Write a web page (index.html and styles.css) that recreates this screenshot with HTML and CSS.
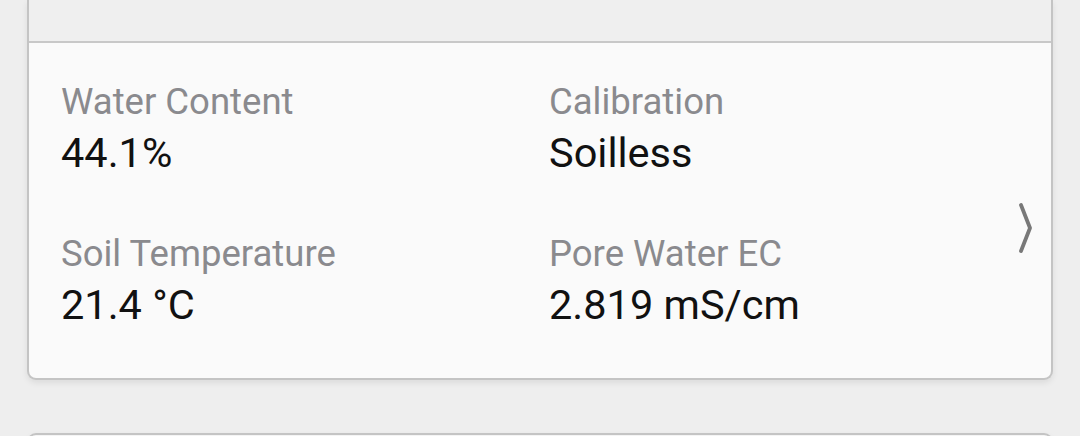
FILE: index.html
```html
<!DOCTYPE html>
<html>
<head>
<meta charset="utf-8">
<link rel="stylesheet" href="styles.css">
</head>
<body>
<div class="card">
  <div class="card-head"></div>
  <div class="card-body">
    <div class="grid">
      <div class="cell">
        <div class="label">Water Content</div>
        <div class="value">44.1%</div>
      </div>
      <div class="cell">
        <div class="label">Calibration</div>
        <div class="value">Soilless</div>
      </div>
      <div class="cell">
        <div class="label">Soil Temperature</div>
        <div class="value">21.4 °C</div>
      </div>
      <div class="cell">
        <div class="label">Pore Water EC</div>
        <div class="value">2.819 mS/cm</div>
      </div>
    </div>
    <svg class="chevron" width="18" height="52" viewBox="0 0 18 52">
      <path d="M4 4 L13 27 L4 50" fill="none" stroke="#787878" stroke-width="3.8" stroke-linecap="round" stroke-linejoin="round"/>
    </svg>
  </div>
</div>
<div class="card next"></div>
</body>
</html>
```
FILE: styles.css
```css
html, body {
  margin: 0;
  padding: 0;
  background: #eeeeee;
  font-family: Roboto, "Liberation Sans", sans-serif;
  overflow: hidden;
}
.card {
  margin-left: 27px;
  width: 1026px;
  box-sizing: border-box;
  border: 2px solid #c4c4c4;
  border-top: none;
  border-radius: 0 0 9px 9px;
  background: #fafafa;
  box-shadow: 0 3px 6px rgba(0,0,0,0.08);
}
.card-head {
  height: 41px;
  background: #efefef;
  border-bottom: 2px solid #c8c8c8;
}
.card-body {
  display: flex;
  align-items: flex-start;
  padding: 37px 16px 0 32px;
  height: 335px;
  box-sizing: border-box;
}
.grid {
  flex: 1;
  display: grid;
  grid-template-columns: 488px 1fr;
  row-gap: 54px;
}
.label {
  font-size: 36.5px;
  color: #8a8a8e;
  line-height: 44px;
  white-space: nowrap;
}
.value {
  font-size: 41.5px;
  color: #111111;
  line-height: 50px;
  margin-top: 4px;
  white-space: nowrap;
}
.chevron {
  display: block;
  margin-top: 121px;
}
.next {
  margin-top: 53px;
  height: 20px;
  border-top: 2px solid #c4c4c4;
  border-radius: 9px 9px 0 0;
  background: #f4f4f4;
}
```
